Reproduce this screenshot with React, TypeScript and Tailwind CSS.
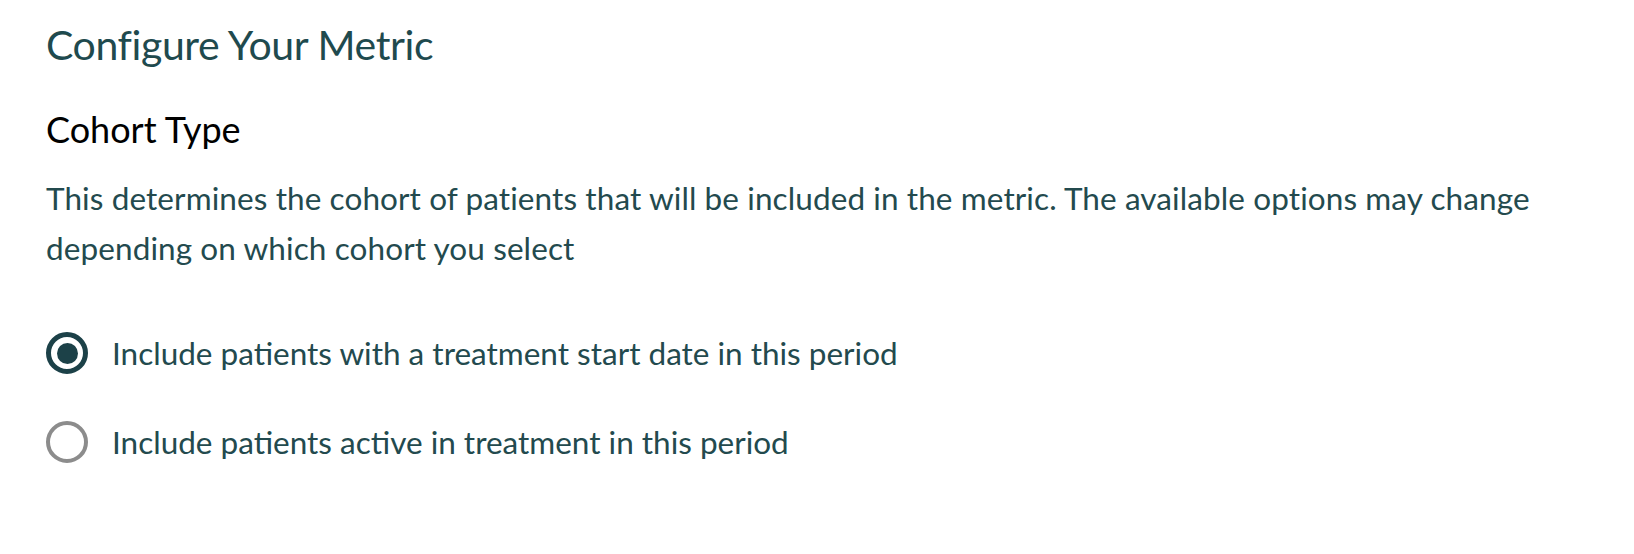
import { useState } from "react";

type CohortOption = {
  id: string;
  label: string;
};

const COHORT_OPTIONS: CohortOption[] = [
  { id: "start", label: "Include patients with a treatment start date in this period" },
  { id: "active", label: "Include patients active in treatment in this period" },
];

export default function App() {
  const [cohort, setCohort] = useState("start");

  return (
    <div className="min-h-[554px] w-full bg-white pl-[46px] pt-[19px] font-['Lato','Liberation_Sans',sans-serif] text-[#234a4e]">
      <h1 className="text-[41px] leading-[52px] font-normal tracking-[-0.4px] text-[#1f4a4e]">Configure Your Metric</h1>

      <section className="mt-[36px]">
        <h2 className="text-[36px] leading-[44px] font-normal text-black">Cohort Type</h2>
        <p className="mt-[22px] max-w-[1540px] text-[31.5px] leading-[50px] tracking-[0.1px]">
          This determines the cohort of patients that will be included in the metric. The available options may
          change depending on which cohort you select
        </p>

        <div role="radiogroup" className="mt-[59px] flex flex-col gap-[47px]">
          {COHORT_OPTIONS.map((option) => {
            const selected = cohort === option.id;

            return (
              <label key={option.id} className="flex h-[42px] cursor-pointer items-center gap-[24px]">
                <input
                  type="radio"
                  name="cohort"
                  className="sr-only"
                  checked={selected}
                  onChange={() => setCohort(option.id)}
                />
                <span
                  className={`flex h-[42px] w-[42px] shrink-0 items-center justify-center rounded-full ${
                    selected ? "border-[5px] border-[#1c4148]" : "border-[4px] border-[#8c8c8c]"
                  }`}
                >
                  {selected ? <span className="h-[21px] w-[21px] rounded-full bg-[#1c4148]" /> : null}
                </span>
                <span className="text-[31.5px] leading-[42px]">{option.label}</span>
              </label>
            );
          })}
        </div>
      </section>
    </div>
  );
}
